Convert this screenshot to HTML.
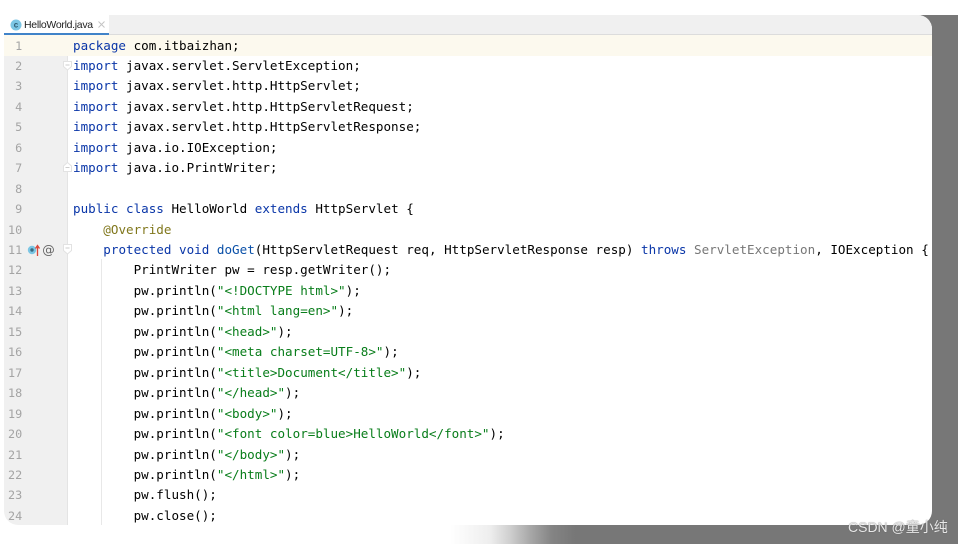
<!DOCTYPE html>
<html><head><meta charset="utf-8"><style>
html,body{margin:0;padding:0;background:#fff;width:964px;height:544px;overflow:hidden}
#dark{position:absolute;left:0;top:15px;width:958px;height:529px;background:linear-gradient(90deg,#fff 0,#fff 450px,#eee 490px,#cfcfcf 510px,#a8a8a8 530px,#848484 552px,#777 575px,#777 100%)}
#card{position:absolute;left:4px;top:15px;width:928px;height:510px;background:#fff;border-radius:0 14px 14px 14px;overflow:hidden}
#tabbar{position:absolute;left:0;top:0;width:928px;height:19px;background:#f0f0f0;border-bottom:1px solid #dcdcdc}
#tab{position:absolute;left:0;top:0;width:105px;height:18px;background:#fff;border-bottom:2px solid #4083c9;z-index:2}
#tabt{position:absolute;left:20px;top:3px;font:10.5px/14px "Liberation Sans",sans-serif;color:#222;letter-spacing:-.3px;white-space:nowrap}
#x{position:absolute;left:94px;top:6px}
#gut{position:absolute;left:0;top:20px;width:63px;height:490px;background:#f0f0f0;border-right:1px solid #e4e4e4}
#cur{position:absolute;left:0;top:20px;width:928px;height:20.5px;background:#fcf9ee}
pre{margin:0;position:absolute;font:12.58px/20.46px "DejaVu Sans Mono","Liberation Mono",monospace;white-space:pre;filter:blur(.25px)}
#nums{left:4px;top:20.5px;color:#a4a4a4;font-size:11.8px}
#code{left:69px;top:20.5px;color:#000}
b{font-weight:normal;color:#0a36a8}
i{font-style:normal;color:#087d1a}
u{text-decoration:none;color:#80771c}
s{text-decoration:none;color:#777}
#ig{position:absolute;left:96.5px;top:244px;width:1px;height:266px;background:#e8e8e8}
svg{position:absolute}
#wm{position:absolute;left:848px;top:519px;font:14px/16px "Liberation Sans","Noto Sans CJK SC",sans-serif;color:#e8e8e8;white-space:nowrap;text-shadow:0 0 1px #555}
</style></head><body>
<div id="dark"></div>
<div id="card">
<div id="tabbar"></div>
<div id="tab">
<svg style="left:6px;top:4px" width="12" height="12"><circle cx="6" cy="6" r="5.5" fill="#7cc6e4"/><text x="6" y="8.7" font-size="8" font-family="Liberation Sans" font-weight="bold" text-anchor="middle" fill="#2c5a70">c</text></svg>
<div id="tabt">HelloWorld.java</div>
<svg id="x" width="7" height="7"><path d="M.5.5L6.5 6.5M6.5.5L.5 6.5" stroke="#c4c4c4" stroke-width="1"/></svg>
</div>
<div id="gut"></div>
<div id="cur"></div>
<div id="ig"></div>
<pre id="nums"> 1
 2
 3
 4
 5
 6
 7
 8
 9
10
11
12
13
14
15
16
17
18
19
20
21
22
23
24</pre>
<pre id="code"><b>package</b> com.itbaizhan;
<b>import</b> javax.servlet.ServletException;
<b>import</b> javax.servlet.http.HttpServlet;
<b>import</b> javax.servlet.http.HttpServletRequest;
<b>import</b> javax.servlet.http.HttpServletResponse;
<b>import</b> java.io.IOException;
<b>import</b> java.io.PrintWriter;

<b>public class</b> HelloWorld <b>extends</b> HttpServlet {
    <u>@Override</u>
    <b>protected void</b> <b style="color:#0a50a8">doGet</b>(HttpServletRequest req, HttpServletResponse resp) <b>throws</b> <s>ServletException</s>, IOException {
        PrintWriter pw = resp.getWriter();
        pw.println(<i>"&lt;!DOCTYPE html&gt;"</i>);
        pw.println(<i>"&lt;html lang=en&gt;"</i>);
        pw.println(<i>"&lt;head&gt;"</i>);
        pw.println(<i>"&lt;meta charset=UTF-8&gt;"</i>);
        pw.println(<i>"&lt;title&gt;Document&lt;/title&gt;"</i>);
        pw.println(<i>"&lt;/head&gt;"</i>);
        pw.println(<i>"&lt;body&gt;"</i>);
        pw.println(<i>"&lt;font color=blue&gt;HelloWorld&lt;/font&gt;"</i>);
        pw.println(<i>"&lt;/body&gt;"</i>);
        pw.println(<i>"&lt;/html&gt;"</i>);
        pw.flush();
        pw.close();</pre>
<svg style="left:59px;top:46px" width="10" height="10"><path d="M.5.5H8.5V5.5L4.5 9L.5 5.5Z" fill="#fff" stroke="#e2e2e2"/><path d="M2.5 4H6.5" stroke="#ccc"/></svg>
<svg style="left:59px;top:147px" width="10" height="10"><path d="M4.5.5L8.5 4V9.5H.5V4Z" fill="#fff" stroke="#e2e2e2"/><path d="M2.5 5.5H6.5" stroke="#ccc"/></svg>
<svg style="left:59px;top:229px" width="10" height="11"><path d="M.5.5H8.5V6.5L4.5 10L.5 6.5Z" fill="#fff" stroke="#e2e2e2"/><path d="M2.5 4H6.5" stroke="#ccc"/></svg>
<svg style="left:23px;top:228px" width="33" height="14"><circle cx="5" cy="7" r="4.2" fill="#7cc6e4"/><circle cx="5" cy="7" r="1.7" fill="#3b6a80"/><path d="M10.5 13V3M8.5 5.5L10.5 2.5L12.5 5.5" stroke="#d9483b" stroke-width="1.3" fill="none"/><text x="21.5" y="11" font-size="12.5" font-family="DejaVu Sans" text-anchor="middle" fill="#666">@</text></svg>
</div>
<div id="wm">CSDN @童小纯</div>
</body></html>
